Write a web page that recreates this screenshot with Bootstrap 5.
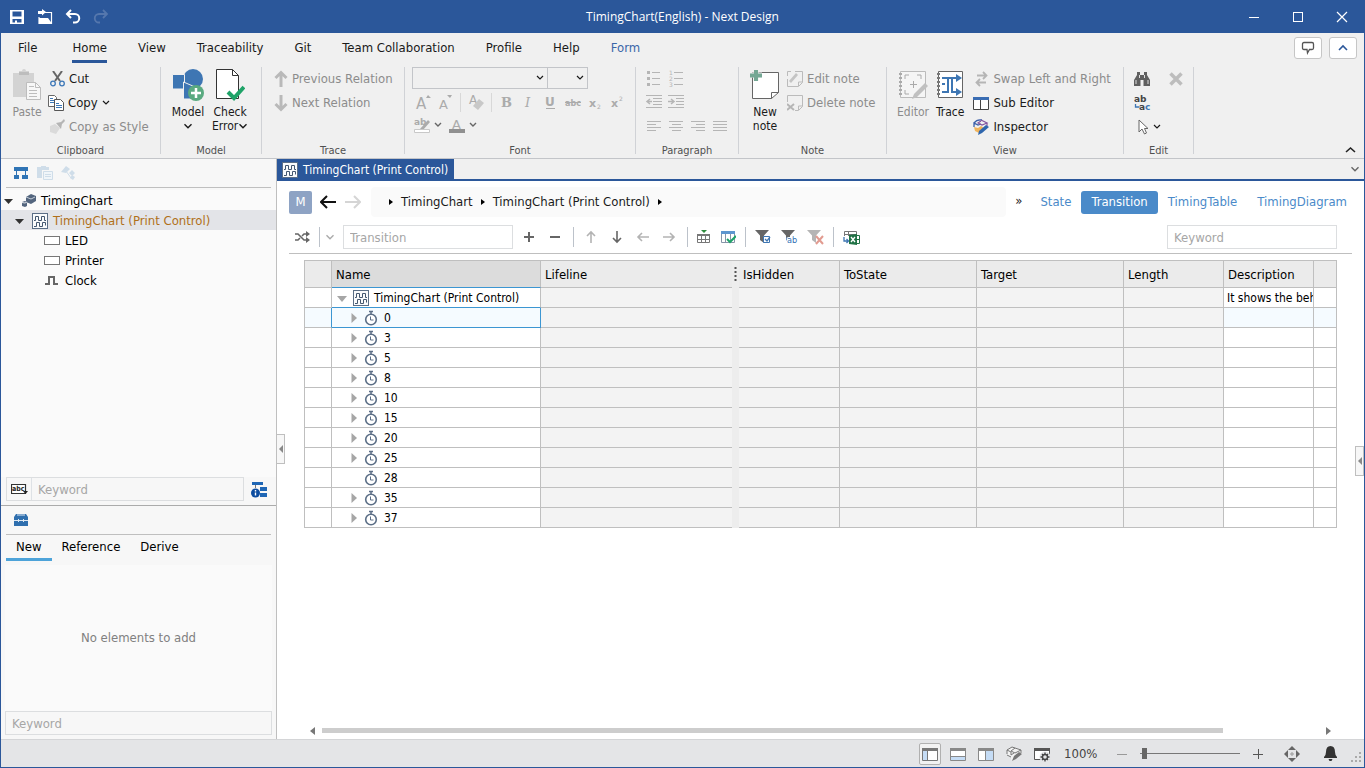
<!DOCTYPE html>
<html lang="en">
<head>
<meta charset="utf-8">
<meta name="viewport" content="width=device-width, initial-scale=1">
<title>TimingChart(English) - Next Design</title>
<link href="https://cdn.jsdelivr.net/npm/bootstrap@5.3.0/dist/css/bootstrap.min.css" rel="stylesheet">
<style>
:root{--brand:#2b579a;--line:#bfbfbf;--muted:#8c8c8c;--sel:#3c96d2}
body{font:13px/20px "DejaVu Sans Condensed","DejaVu Sans",sans-serif;color:#1a1a1a;border:1px solid var(--brand);height:100vh;min-height:600px;overflow:hidden;background:#fff}
button{background:none;border:0;padding:0;color:inherit;display:flex;align-items:center;text-align:left}
button:disabled{color:var(--muted)}
svg{flex:none;display:block}
a{color:inherit;text-decoration:none}
input::placeholder{color:#a6a6a6}
.titlebar{background:var(--brand);height:32px;color:#fff;font:12px/16px "Open Sans",sans-serif}
.side{flex:1 1 0}
.win{width:44px;height:32px;justify-content:center}
.menubar{background:#f0f0f0;height:33px}
.menubar .nav{gap:31px;padding-left:17px}
.menubar .nav a{display:block;line-height:30px;height:30px;border-bottom:3px solid transparent}
.menubar .nav a.current{border-color:var(--brand)}
.menubar .nav a.form-link{color:#3b66a8}
.chips{gap:7px;margin-right:7px}
.chip{width:28px;height:22px;background:#fff;border:1px solid #c6c6c6;border-radius:3px;justify-content:center}
.ribbon{background:#f0f0f0;height:93px;border-bottom:1px solid #c3c5c9;padding-top:1px}
.group{border-right:1px solid #d0d2d6;height:87px;flex:none}
.group-body{height:71px;display:flex}
.group-label{font-size:11px;line-height:16px;padding-top:5px;text-align:center;color:#505050}
.row3 button{height:24px;white-space:nowrap;gap:4px}
.big{flex-direction:column;font-size:12px;line-height:14px;text-align:center;align-self:flex-start;padding-top:2px}
.big svg{margin-bottom:4px}
.big span{display:block}
.combo{appearance:none;background:#f0f0f0;border:1px solid #c3c5c9;height:22px;border-radius:0;display:block}
.combo-box{position:relative}
.combo-box svg{position:absolute;right:4px;top:8px}
.w-font{width:136px}.w-size{width:40px;border-left:0}
.panel{width:276px;flex:none;border-right:1px solid var(--line);background:#f7f7f7}
.rule{height:1px;background:var(--line);margin:0 5px}
.tree{background:#fafafa;margin-top:2px}
.tree li{height:20px;display:flex;align-items:center;line-height:18px;padding-top:1px;color:#000}
.tree li.chosen{background:#e3e4e8;color:#b0701a}
.tree .leaf{padding-left:43px;gap:5px}
.field{border:1px solid #dcdee0;background:transparent;height:24px;padding:0 6px;color:#333;min-width:0;border-radius:0}
.find{border:1px solid #dcdee0;height:24px}
.ptabs a{padding:0 10px;height:26px;line-height:23px;border-bottom:3px solid transparent;color:#000}
.ptabs a.current{border-color:#4da3d9}
.tabstrip{background:#f0f0f0;border-bottom:2px solid var(--brand);height:22px}
.doc-tab{background:var(--brand);color:#fff;padding:2px 6px 0 5px;gap:5px;height:20px;font-size:12px;line-height:18px}
.m-key{width:23px;height:23px;background:#8ea3c4;color:#fff;border-radius:2px;justify-content:center}
.crumbs{background:#fafafa;border-radius:4px;height:30px}
.view-btn{height:23px;padding:0 10px;color:#4a8ac9}
.view-btn.current{background:#4a8ac9;color:#fff;border-radius:3px}
.tb button{width:26px;height:24px;justify-content:center}
.tb .w24{width:24px}
.vsep{width:1px;height:20px;background:#bcc2ca;margin:0 4px 0 5px}
.wide{width:170px}
.grid{table-layout:fixed;border-collapse:separate;border-spacing:0;width:100%;border:solid var(--line);border-width:1px 0 0 1px;color:#000}
.grid th,.grid td{border:solid var(--line);border-width:0 1px 1px 0;overflow:hidden;white-space:nowrap}
.grid th{height:27px;font-weight:400;background:#ebebeb;padding:2px 4px 0;line-height:20px}
.grid th.name{background:#dcdcdc;border-bottom-color:var(--sel)}
.grid td{height:20px;font-size:12px;line-height:16px;padding:0 3px}
.grid td.off{background:#f3f3f3}
.grid .nb{border-right:0}
.grid .split{background:#ededed;border:0;padding:0}
.grid .root td:nth-child(2){border-bottom-color:var(--sel)}
.grid .active td{background:#f5fbff}
.grid .active td.off{background:#f3f3f3}
.grid .active td.split{background:#ededed}
.grid .active td:nth-child(1){border-right-color:var(--sel)}
.grid .active td:nth-child(2){border-color:var(--sel)}
.grid .last-text{padding-right:0}
.cell{display:flex;align-items:center;height:19px}
.handle{position:absolute;width:9px;height:30px;border:1px solid var(--line);background:#f7f7f7;justify-content:center}
.track{height:5px;background:#cdcdcd;margin-right:103px}
.status{height:28px;background:#e4e5e7;border-top:1px solid #d4d5d7;color:#444}
.status .sbtn{width:28px;height:22px;justify-content:center}
.status .on{width:22px;border:1px solid #b0b0b0;border-radius:2px;background:#f2f2f2;margin-right:3px}
.zoom{appearance:none;width:100px;height:14px;background:linear-gradient(#777,#777) center/100% 1px no-repeat;margin:0}
.zoom::-webkit-slider-thumb{appearance:none;width:5px;height:11px;background:#666}
</style>
</head>
<body class="d-flex flex-column">
<svg width="0" height="0" class="position-absolute">
<defs>
<symbol id="wave" viewBox="0 0 16 16"><rect x=".5" y=".5" width="15" height="15" fill="#fafbfc" stroke="#5b6e86"/><path d="M2 7.500h1.500v-4h3v4h3v-4h3v4h1.500M2 13.500h2.500v-4h3v4h3v-4h3v3" fill="none" stroke="#44576f"/></symbol>
<symbol id="clock" viewBox="0 0 14 16"><path d="M7 1v3M5 1.500h4" stroke="#5b6e86" stroke-width="1.500" fill="none"/><circle cx="7" cy="9.500" r="5.300" fill="#fff" stroke="#5b6e86" stroke-width="1.600"/><path d="M6.500 6.500v3.500H9.500" fill="none" stroke="#5b6e86"/></symbol>
<symbol id="chev" viewBox="0 0 8 6"><path d="M1 1l3 3 3-3" fill="none" stroke="currentColor" stroke-width="1.200"/></symbol>
<symbol id="tri" viewBox="0 0 6 10"><path d="M.5 0v10L6 5z" fill="#a6a6a6"/></symbol>
<symbol id="arr" viewBox="0 0 16 16"><path d="M8 14V3M4 7l4-4 4 4" fill="none" stroke="currentColor" stroke-width="1.600"/></symbol>
<symbol id="boldarr" viewBox="0 0 14 18"><path d="M7 17V3M1.500 8L7 2.500 12.500 8" fill="none" stroke="#b9b9b9" stroke-width="3"/></symbol>
<symbol id="funnel" viewBox="0 0 17 16"><path d="M0 1h14L9 6.500V14l-4-3V6.500z" fill="currentColor"/></symbol>
<symbol id="foot" viewBox="0 0 4 6"><path d="M0 0v6l4-3z"/></symbol>
</defs>
</svg>

<header class="titlebar d-flex align-items-center">
  <div class="side d-flex align-items-center gap-2">
    <button class="ms-2" aria-label="Save"><svg width="16" height="16" viewBox="0 0 16 16"><path fill="#fff" fill-rule="evenodd" d="M1 1h14v14H1zM3.500 2.500v5h9v-5zM3.500 10v3.500H6v-2h2v2h4.500V10z"/></svg></button>
    <button class="ms-1" aria-label="Open"><svg width="16" height="16" viewBox="0 0 16 16"><path d="M8 3.500h6.500v11H2V8" fill="none" stroke="#fff" stroke-width="1.200"/><path d="M2 9h9l4 5.500H2zM1 5V2h4V0l4 3-4 3.500V5z" fill="#fff"/></svg></button>
    <button class="ms-1" aria-label="Undo"><svg width="16" height="16" viewBox="0 0 16 16"><path d="M2 5h8a4 4 0 0 1 0 8.500H8M6 1L2 5l4 4" fill="none" stroke="#fff" stroke-width="2"/></svg></button>
    <button class="ms-1" disabled aria-label="Redo"><svg width="16" height="16" viewBox="0 0 16 16"><path d="M14 5H6a4 4 0 0 0 0 8.500h1M10 1l4 4-4 4" fill="none" stroke="#5577ad" stroke-width="1.800"/></svg></button>
  </div>
  <div>TimingChart(English) - Next Design</div>
  <div class="side d-flex justify-content-end">
    <button class="win" aria-label="Minimize"><svg width="12" height="12"><path d="M1 6.500h10" stroke="#fff"/></svg></button>
    <button class="win" aria-label="Maximize"><svg width="12" height="12"><rect x="1.500" y="1.500" width="9" height="9" fill="none" stroke="#fff"/></svg></button>
    <button class="win" aria-label="Close"><svg width="12" height="12"><path d="M1 1l10 10M11 1L1 11" stroke="#fff" stroke-width="1.200"/></svg></button>
  </div>
</header>

<nav class="menubar d-flex justify-content-between">
  <div class="nav flex-nowrap">
    <a href="#" class="me-1">File</a><a href="#" class="current">Home</a><a href="#">View</a><a href="#">Traceability</a><a href="#">Git</a><a href="#">Team Collaboration</a><a href="#">Profile</a><a href="#">Help</a><a href="#" class="form-link">Form</a>
  </div>
  <div class="chips d-flex pt-1">
    <button class="chip" aria-label="Comments"><svg width="14" height="14"><path d="M3 1.500h8q1.500 0 1.500 1.500v4q0 1.500-1.500 1.500H8.500L6.500 12 6 8.500H3Q1.500 8.500 1.500 7V3Q1.500 1.500 3 1.500z" fill="none" stroke="#555" stroke-width="1.300"/></svg></button>
    <button class="chip" aria-label="Collapse"><svg width="12" height="8"><path d="M2 6l4-4 4 4" fill="none" stroke="#2b579a" stroke-width="1.600"/></svg></button>
  </div>
</nav>

<section class="ribbon d-flex">
  <div class="group" style="width:160px">
    <div class="group-body">
      <button class="big" disabled style="margin:0 8px 0 11px"><svg width="30" height="32"><path d="M1 4h6V2h3a2 2 0 0 1 4 0h3v2h5v24H1z" fill="#d3d3d3"/><path d="M7 3h10v3H7z" fill="#bdbdbd"/><path d="M14.500 13.500h9l5 5v12h-14z" fill="#f7f7f7" stroke="#bdbdbd"/><path d="M17 17.500h5M17 21.500h8M17 24.500h8M17 27.500h8M23.500 13.500v5h5" stroke="#bdbdbd" fill="none"/></svg><span>Paste</span></button>
      <div class="row3">
        <button><svg width="15" height="16"><path d="M3 0l7 10M12 0L5 10" stroke="#666" stroke-width="2"/><circle cx="3" cy="12.500" r="2.300" fill="none" stroke="#3d78b8" stroke-width="1.300"/><circle cx="12" cy="12.500" r="2.300" fill="none" stroke="#3d78b8" stroke-width="1.300"/></svg>Cut</button>
        <button style="margin-left:-2px"><svg width="16" height="16"><path d="M.5.500h6l2 2v9h-8z" fill="#fff" stroke="#666"/><path d="M2 3.500h3M2 5.500h4M2 7.500h4" stroke="#3d78b8"/><path d="M6.500 4.500h6l3 3v8h-9z" fill="#fff" stroke="#555"/><path d="M8 8.500h3M8 10.500h6M8 12.500h6" stroke="#3d78b8"/></svg>Copy<svg width="8" height="6"><use href="#chev"/></svg></button>
        <button disabled><svg width="15" height="16"><path d="M0 7l5-2 5 4-4 6-6-2z" fill="#dadada"/><path d="M6 4l5-1 3-3 1 2-3 3-1 5z" fill="#b5b5b5"/></svg>Copy as Style</button>
      </div>
    </div>
    <div class="group-label">Clipboard</div>
  </div>
  <div class="group" style="width:101px">
    <div class="group-body">
      <button class="big" style="margin:0 7px 0 10px"><svg width="34" height="32"><circle cx="22" cy="10" r="10" fill="#3e76b3"/><path d="M1.500 5.500h12V20h-12z" fill="#3e76b3" stroke="#f0f0f0"/><path d="M12.500 13l14 6v11h-14z" fill="#3e76b3" stroke="#f0f0f0"/><circle cx="25" cy="24" r="8" fill="#5aaa80"/><path d="M25 19v10M20 24h10" stroke="#fff" stroke-width="2.500"/></svg><span>Model</span><svg width="10" height="7" class="mt-1"><use href="#chev"/></svg></button>
      <button class="big"><svg width="30" height="32"><path d="M1.500.500h16l6 6v23h-22z" fill="#fff" stroke="#333"/><path d="M17.500.500v6h6" fill="none" stroke="#333"/><path d="M13 23l6 6 10-11" fill="none" stroke="#1fa368" stroke-width="4"/></svg><span>Check</span><span class="d-flex align-items-center">Error<svg width="10" height="7" class="m-0"><use href="#chev"/></svg></span></button>
    </div>
    <div class="group-label">Model</div>
  </div>
  <div class="group" style="width:143px">
    <div class="group-body ps-2 ms-1">
      <div class="row3"><button disabled><svg width="14" height="18"><use href="#boldarr"/></svg>Previous Relation</button>
      <button disabled><svg width="14" height="18"><use href="#boldarr" transform="rotate(180 7 9)"/></svg>Next Relation</button></div>
    </div>
    <div class="group-label">Trace</div>
  </div>
  <div class="group" style="width:231px">
    <div class="group-body flex-column" style="padding-left:7px">
      <div class="d-flex"><div class="combo-box"><select class="combo w-font" aria-label="Font"></select><svg width="8" height="6"><use href="#chev"/></svg></div><div class="combo-box"><select class="combo w-size" aria-label="Size"></select><svg width="8" height="6"><use href="#chev"/></svg></div></div>
      <svg width="216" height="48" font-family="DejaVu Sans" fill="#ababab" role="img" aria-label="Character formatting">
        <text x="4" y="20" font-size="15">A</text><path d="M14 9l2-3 3 3M35 6h5l-2 3z"/><text x="27" y="20" font-size="13">A</text>
        <path d="M48.500 4v19M79.500 4v19" stroke="#d8d8d8"/><text x="57" y="15" font-size="12">A</text><path d="M61 17l6-7 5 4-6 7z" fill="#c8c8c8"/>
        <text x="89" y="18" font-size="13" font-weight="bold" font-family="DejaVu Serif">B</text><text x="113" y="18" font-size="13" font-style="italic" font-family="DejaVu Serif">I</text><text x="133" y="17" font-size="12" font-weight="bold">U</text><path d="M134 19.500h9M153 13.500h16" stroke="#ababab"/><text x="153" y="17" font-size="8" font-weight="bold">abc</text><text x="177" y="18" font-size="11" font-weight="bold">x</text><text x="185" y="20" font-size="6">2</text><text x="199" y="18" font-size="11" font-weight="bold">x</text><text x="207" y="12" font-size="6">2</text>
        <text x="2" y="36" font-size="9" font-weight="bold">ab</text><path d="M8 40l8-9 2 2-7 8z"/><path d="M2.500 40.500h15v3h-15z" fill="#fff" stroke="#c8c8c8"/><text x="40" y="40" font-size="13">A</text><path d="M37 40h16v4H37z" fill="#909090"/><path d="M23 34l3 3 3-3M58 34l3 3 3-3" fill="none" stroke="#666" stroke-width="1.400"/>
      </svg>
    </div>
    <div class="group-label">Font</div>
  </div>
  <div class="group" style="width:103px">
    <div class="group-body ps-2">
      <svg width="90" height="71" fill="none" stroke="#b5b5b5" role="img" aria-label="Lists, indents and alignment"><path d="M8 5.500h8M8 11.500h8M8 17.500h8M30 5.500h9M30 11.500h9M30 17.500h9M2 28.500h16M9 31.500h9M9 34.500h9M9 37.500h9M2 40.500h16M24 28.500h16M32 31.500h8M32 34.500h8M32 37.500h8M24 40.500h16M3 54.500h14M3 57.500h9M3 60.500h14M3 63.500h9M25 54.500h14M28 57.500h9M25 60.500h14M28 63.500h9M47 54.500h14M52 57.500h9M47 60.500h14M52 63.500h9M69 54.500h14M69 57.500h14M69 60.500h14M69 63.500h14"/><path d="M3 5.500h3M3 11.500h3M3 17.500h3" stroke-width="3"/><path d="M3 34.500h5M6 32l-3 2.500L6 37M24 34.500h6M27 32l3 2.500-3 2.500" stroke-width="1.500"/><g fill="#b5b5b5" stroke="none" font-size="6" font-family="DejaVu Sans"><text x="25" y="8">1</text><text x="25" y="14">2</text><text x="25" y="20">3</text></g></svg>
    </div>
    <div class="group-label">Paragraph</div>
  </div>
  <div class="group" style="width:148px">
    <div class="group-body">
      <button class="big" style="margin:0 7px 0 11px"><svg width="30" height="32"><path d="M2.500 3.500h26v20l-7 6h-19z" fill="#fff" stroke="#666"/><path d="M21.500 29.500v-6h7" fill="none" stroke="#666"/><path d="M6 0v12M0 6h12" stroke="#f0f0f0" stroke-width="5"/><path d="M6 1v11M0 6.500h12" stroke="#74a794" stroke-width="4"/></svg><span>New<br>note</span></button>
      <div class="row3">
        <button disabled><svg width="16" height="16"><path d="M8 .500h7.500v11l-4 4H.500V8M11.500 15v-4h4M.500 5V.500H4" fill="none" stroke="#bbb"/><path d="M2 10l7-8 2 2-7 8z" fill="#c4c4c4"/></svg>Edit note</button>
        <button disabled><svg width="16" height="16"><path d="M.500 7V.500h15v11l-4 4H8M11.500 15v-4h4" fill="none" stroke="#bbb"/><path d="M0 9l7 6M7 9l-7 6" stroke="#b5b5b5" stroke-width="2"/></svg>Delete note</button>
      </div>
    </div>
    <div class="group-label">Note</div>
  </div>
  <div class="group" style="width:237px">
    <div class="group-body">
      <button class="big" disabled style="margin:0 7px 0 10px"><svg width="30" height="32"><path d="M2.500 2.500h25v26h-25z" fill="#f5f5f5" stroke="#bbb"/><path d="M2.500 4v24" stroke="#aaa" stroke-width="3" stroke-dasharray="2 2"/><path d="M7 10V6h4M19 6h4v4M7 21v4h4M15.500 12v7M12 15.500h7" fill="none" stroke="#aaa"/><path d="M14 30l2-5 11-11 3 3-11 11z" fill="#c0c0c0"/></svg><span>Editor</span></button>
      <button class="big" style="margin-right:9px"><svg width="28" height="32"><path d="M2.500 2.500h24v26h-24z" fill="#fff" stroke="#666"/><path d="M2.500 4v24" stroke="#777" stroke-width="3" stroke-dasharray="2 2"/><path d="M6 9h5M6 23h6V9h9M14 12" fill="none" stroke="#3e76b3" stroke-width="2"/><path d="M16 9v14h5M6 15h3" fill="none" stroke="#3e76b3" stroke-width="2"/><path d="M20 9m0-4l6 4-6 4zM20 19l6 4-6 4z" fill="#3e76b3"/></svg><span>Trace</span></button>
      <div class="row3">
        <button disabled><svg width="16" height="16"><path d="M4 4.500h9M10 1l3.500 3.500L10 8M13 11.500H4M7 8l-3.500 3.500L7 15" fill="none" stroke="#b5b5b5" stroke-width="1.800"/></svg>Swap Left and Right</button>
        <button><svg width="16" height="16"><path d="M.500 2.500h15v12H.500zM7.500 4v10" fill="#fff" stroke="#444"/><path d="M0 2h16v3H0z" fill="#3a6db3"/></svg>Sub Editor</button>
        <button><svg width="16" height="16"><path d="M1 8l4 1 3-2 3 2-5 5-4-2z" fill="#f0b45c"/><path d="M1 4q3-4 8-3M1 8V4l4 2 3-1" fill="none" stroke="#3a5fa8" stroke-width="1.300"/><path d="M8 1l6 3-5 2-4-2 3-2M14 4v3" fill="none" stroke="#8657a0" stroke-width="1.200"/><path d="M5 16l1-4 7-6 3 2-7 6z" fill="#2f66ad"/></svg>Inspector</button>
      </div>
    </div>
    <div class="group-label">View</div>
  </div>
  <div class="group" style="width:70px">
    <div class="group-body" style="padding-left:10px;gap:8px">
      <div class="row3">
        <button aria-label="Find"><svg width="16" height="14"><path d="M3 0h3v3h4V0h3v3l3 5v6H9.500V8h-3v6H0V8l3-5z" fill="#606060"/><path d="M2 8v4M14 8v4M5.500 3v3M10.500 3v3" stroke="#ddd"/></svg></button>
        <button aria-label="Replace"><svg width="17" height="18" font-family="DejaVu Sans" font-weight="bold" font-size="9"><text x="0" y="8" fill="#444">ab</text><text x="5" y="16" fill="#444">a</text><text x="11" y="16" fill="#3e76b3">c</text><path d="M1.500 10v3h4" fill="none" stroke="#3e76b3" stroke-width="1.300"/></svg></button>
        <button class="ps-1" aria-label="Select"><svg width="11" height="16"><path d="M1 1v12l3-3 2.500 5 2-1L6.500 9.500H10z" fill="#fff" stroke="#666"/></svg><svg width="8" height="6"><use href="#chev"/></svg></button>
      </div>
      <button class="align-self-start" style="height:24px" disabled aria-label="Delete"><svg width="14" height="14"><path d="M1.500 1.500l11 11M12.500 1.500l-11 11" stroke="#bdbdbd" stroke-width="3.500"/></svg></button>
    </div>
    <div class="group-label">Edit</div>
  </div>
  <button class="ms-auto align-self-end mb-1 me-2" aria-label="Collapse ribbon"><svg width="11" height="8"><path d="M1 6l4.500-4L10 6" fill="none" stroke="#222" stroke-width="1.600"/></svg></button>
</section>

<main class="d-flex flex-grow-1 position-relative" style="min-height:0">
  <aside class="panel d-flex flex-column">
    <div class="d-flex align-items-center gap-2" style="height:28px;padding-left:12px">
      <button aria-label="Model tree"><svg width="16" height="14"><path d="M1 1h14v4H1zM1 9h5v4H1zM9 9h6v4H9z" fill="#2f74b5"/><path d="M3.500 5v4M12.500 5v4" stroke="#2f74b5"/></svg></button>
      <button aria-label="Pages" disabled><svg width="16" height="14"><path d="M0 1h4V0h5v1h3v3H5v8H0z" fill="#cfdde9"/><path d="M6.500 5.500h9v8h-9zM8 8.500h6M8 10.500h6" fill="#f0f5f9" stroke="#cfdde9"/></svg></button>
      <button aria-label="Relations" disabled><svg width="16" height="14"><path d="M5 0l4 3-4 4-5-1zM11 4l3 3-3 3-3-3zM11 9l3 2-2 3-3-2z" fill="#cfdde9"/><path d="M5 5l5 7" stroke="#cfdde9"/></svg></button>
    </div>
    <div class="rule"></div>
    <ul class="tree list-unstyled flex-grow-1 mb-0">
      <li><svg width="9" height="6" style="margin:3px 9px 0 3px"><path d="M0 0h9L4.500 5z" fill="#333"/></svg><svg width="14" height="14" style="margin-right:5px"><path d="M4 3l5-3 5 2v5l-5 3-5-2z" fill="#53657e"/><path d="M4 3l5 2 4-2" stroke="#c8d0da" fill="none"/><path d="M0 8l3-1 2 1v4l-2 1-3-1z" fill="#53657e"/><path d="M0 8.500l3 .5 2-1" stroke="#e0e4ea" fill="none"/></svg>TimingChart</li>
      <li class="chosen"><svg width="9" height="6" style="margin:3px 8px 0 14px"><path d="M0 0h9L4.500 5z" fill="#333"/></svg><svg width="16" height="16" style="margin-right:5px"><use href="#wave"/></svg>TimingChart (Print Control)</li>
      <li class="leaf"><svg width="16" height="10"><rect x=".5" y=".5" width="15" height="8" fill="#fff" stroke="#777"/></svg>LED</li>
      <li class="leaf"><svg width="16" height="10"><rect x=".5" y=".5" width="15" height="8" fill="#fff" stroke="#777"/></svg>Printer</li>
      <li class="leaf"><svg width="16" height="10"><path d="M1 8h4V1h5v7h4" fill="none" stroke="#666" stroke-width="2"/></svg>Clock</li>
    </ul>
    <div class="d-flex align-items-center" style="padding:0 8px 4px 5px;gap:7px">
      <div class="find d-flex align-items-center flex-grow-1"><button class="h-100 ps-1" style="width:24px" aria-label="Search mode"><svg width="18" height="12"><path d="M.500 1.500h14v9H.500z" fill="#fff" stroke="#333" stroke-width="1.200"/><text x="1" y="8" font-size="7" font-weight="bold" font-family="DejaVu Sans Condensed" fill="#222">abc</text><path d="M12 8h5l-2.500 3z" fill="#222"/></svg></button><input class="border-0 bg-transparent h-100 border-start flex-grow-1" style="min-width:0;padding-left:6px" placeholder="Keyword" aria-label="Tree keyword"></div>
      <button aria-label="Tree details"><svg width="17" height="17"><path d="M1 1h11v3H1zM9 6h7v4H9zM9 12h7v4H9z" fill="#1f66b5"/><path d="M4.500 4v3" stroke="#777"/><circle cx="4.500" cy="12" r="4.500" fill="#0d4da0"/><path d="M4.500 9v1.500M4.500 11.500v3" stroke="#fff" stroke-width="1.400"/></svg></button>
    </div>
    <div style="height:1px;background:#ababab"></div>
    <section class="d-flex flex-column" style="flex:0 0 233px">
      <div class="d-flex align-items-center" style="height:28px;padding-left:13px"><svg width="14" height="14"><path d="M2 1h10l2 3v9H0V4z" fill="#2f6fae"/><path d="M3 2h8M0 7.500h14M4.500 6v3M9.500 6v3" stroke="#dfe9f3"/></svg></div>
      <div class="rule"></div>
      <nav class="ptabs d-flex" style="padding-left:5px"><a href="#" class="current">New</a><a href="#">Reference</a><a href="#">Derive</a></nav>
      <div class="flex-grow-1 d-flex align-items-center justify-content-center" style="margin:4px 4px 0;background:#fafafa;color:#808080">No elements to add</div>
      <input class="field" style="margin:0 4px 4px" placeholder="Keyword" aria-label="Element keyword">
    </section>
  </aside>

  <article class="flex-grow-1 d-flex flex-column position-relative" style="min-width:0">
    <div class="tabstrip d-flex justify-content-between align-items-center">
      <button class="doc-tab"><svg width="16" height="16"><use href="#wave"/></svg>TimingChart (Print Control)</button>
      <button class="me-1" style="color:#666" aria-label="Open tabs"><svg width="10" height="7"><use href="#chev"/></svg></button>
    </div>
    <div class="d-flex align-items-center" style="padding:6px 7px 0 12px">
      <button class="m-key">M</button>
      <button style="margin-left:8px;color:#111" aria-label="Back"><svg width="16" height="14"><path d="M16 7H1M7 1L1 7l6 6" fill="none" stroke="currentColor" stroke-width="2"/></svg></button>
      <button style="margin:0 10px 0 9px;color:#d5d5d5" aria-label="Forward"><svg width="16" height="14"><path d="M0 7h15M9 1l6 6-6 6" fill="none" stroke="currentColor" stroke-width="2"/></svg></button>
      <nav class="crumbs d-flex align-items-center flex-grow-1 gap-2" style="padding-left:18px"><svg width="4" height="6"><use href="#foot"/></svg><a href="#">TimingChart</a><svg width="4" height="6"><use href="#foot"/></svg><a href="#">TimingChart (Print Control)</a><svg width="4" height="6"><use href="#foot"/></svg></nav>
      <button style="margin:0 8px 2px 9px" aria-label="More">»</button>
      <button class="view-btn">State</button><button class="view-btn current">Transition</button><button class="view-btn">TimingTable</button><button class="view-btn">TimingDiagram</button>
    </div>
    <div class="tb d-flex align-items-center" style="padding:8px 27px 4px 12px;color:#666">
      <button aria-label="Shuffle"><svg width="16" height="12"><path d="M1 3h3l6 6h4M1 9h3l2-2M8 5l2-2h4" fill="none" stroke="currentColor" stroke-width="1.600"/><path d="M12 0l4 3-4 3zM12 6l4 3-4 3z" fill="currentColor"/></svg></button>
      <span class="vsep ms-1 me-0"></span>
      <button style="width:19px;color:#aaa" aria-label="Options"><svg width="10" height="7"><use href="#chev"/></svg></button>
      <input class="field wide ms-1" style="margin-right:3px" placeholder="Transition" aria-label="Transition">
      <button aria-label="Add"><svg width="12" height="12"><path d="M6 1v10M1 6h10" stroke="currentColor" stroke-width="2"/></svg></button>
      <button aria-label="Remove"><svg width="12" height="12"><path d="M1 6h10" stroke="currentColor" stroke-width="2"/></svg></button>
      <span class="vsep"></span>
      <button disabled aria-label="Up"><svg width="16" height="16" opacity=".65"><use href="#arr"/></svg></button>
      <button aria-label="Down"><svg width="16" height="16"><use href="#arr" transform="rotate(180 8 8)"/></svg></button>
      <button disabled aria-label="Left"><svg width="16" height="16" opacity=".65"><use href="#arr" transform="rotate(-90 8 8)"/></svg></button>
      <button disabled aria-label="Right"><svg width="16" height="16" opacity=".65"><use href="#arr" transform="rotate(90 8 8)"/></svg></button>
      <span class="vsep"></span>
      <button class="w24" aria-label="Insert row"><svg width="14" height="14"><path d="M4 0h6L7 3z" fill="#2e8b3d"/><path d="M.500 5.500h12v7H.500zM4.500 5v8M8.500 5v8M0 9.500h13" fill="none" stroke="#777"/><path d="M0 4h13v2H0z" fill="#777"/></svg></button>
      <button class="w24" aria-label="Check columns"><svg width="15" height="14"><path d="M.500 1.500h13v11H.500zM4.500 3v9M9.500 3v9" fill="#fff" stroke="#8795a8"/><path d="M0 1h14v3H0z" fill="#5e96cf"/><path d="M6 9l3 3 6-6" fill="none" stroke="#1fa368" stroke-width="2"/></svg></button>
      <span class="vsep"></span>
      <button aria-label="Filter by value"><svg width="17" height="16"><use href="#funnel"/><path d="M8.500 7.500h6v6h-6z" fill="#fff" stroke="#3e76b3"/><path d="M10 10l2 2 3-4" fill="none" stroke="#3e76b3" stroke-width="1.300"/></svg></button>
      <button aria-label="Filter by text"><svg width="17" height="16"><use href="#funnel"/><text x="6" y="14" font-size="9" font-family="DejaVu Sans Condensed" fill="#2f6fb5" stroke="#fff" stroke-width="2" paint-order="stroke">ab</text></svg></button>
      <button disabled aria-label="Clear filter"><svg width="17" height="16" style="color:#b5b5b5"><use href="#funnel"/><path d="M9 7l7 8M16 7l-7 8" stroke="#e29b90" stroke-width="2"/></svg></button>
      <span class="vsep"></span>
      <button aria-label="Export to Excel"><svg width="17" height="15"><path d="M1.500 6V1.500h12V5M1 4.500h12M5.500 1v5" fill="none" stroke="#777"/><path d="M1 7v4h4M3.500 9l2 2-2 2" fill="none" stroke="#3e76b3" stroke-width="1.300"/><path d="M6 5l8-1v11l-8-1z" fill="#217346"/><path d="M14 5.500h2.500v8H14M14 9.500h2" fill="#fff" stroke="#217346"/><path d="M8 7l4 5M12 7l-4 5" stroke="#fff" stroke-width="1.300"/></svg></button>
      <input class="field wide ms-auto" placeholder="Keyword" aria-label="Grid keyword">
    </div>
    <div class="rule" style="margin:0 12px"></div>
    <div style="padding:6px 27px 0">
      <table class="grid">
        <colgroup><col style="width:27px"><col style="width:209px"><col><col style="width:7px"><col style="width:101px"><col style="width:137px"><col style="width:147px"><col style="width:100px"><col style="width:90px"><col style="width:23px"></colgroup>
        <thead><tr><th></th><th class="name">Name</th><th class="nb">Lifeline</th><th class="split"><svg width="3" height="15" class="mx-auto"><path d="M1.500 0v15" stroke="#555" stroke-width="2" stroke-dasharray="2 2"/></svg></th><th>IsHidden</th><th>ToState</th><th>Target</th><th>Length</th><th>Description</th><th></th></tr></thead>
        <tbody id="rows">
          <tr class="root"><td></td><td><div class="cell"><svg width="10" height="6" style="margin:3px 6px 0 2px"><path d="M0 0h10L5 6z" fill="#a6a6a6"/></svg><svg width="16" height="16" style="margin-right:5px"><use href="#wave"/></svg>TimingChart (Print Control)</div></td><td class="off nb"></td><td class="split"></td><td class="off"></td><td class="off"></td><td class="off"></td><td class="off"></td><td class="last-text">It shows the beh</td><td></td></tr>
        </tbody>
      </table>
    </div>
    <div class="mt-auto d-flex align-items-center" style="padding:0 33px;height:17px">
      <svg width="5" height="8" style="margin-right:7px"><path d="M5 0v8L0 4z" fill="#777"/></svg>
      <div class="track flex-grow-1"></div>
      <svg width="5" height="8"><path d="M0 0v8l5-4z" fill="#777"/></svg>
    </div>
    <button class="handle" style="left:-1px;top:275px" aria-label="Collapse left panel"><svg width="4" height="8"><path d="M4 0v8L0 4z" fill="#888"/></svg></button>
    <button class="handle" style="right:0;top:287px" aria-label="Expand right panel"><svg width="4" height="8"><path d="M4 0v8L0 4z" fill="#888"/></svg></button>
  </article>
</main>

<footer class="status d-flex align-items-center justify-content-end">
  <button class="sbtn on" aria-label="Left pane"><svg width="16" height="14"><path d="M.500 1.500h15v12H.500z" fill="#fff" stroke="#777"/><path d="M1 4h4v9H1z" fill="#c5dcf5"/><path d="M0 1h16v3H0zM5 4h1v10H5z" fill="#777"/></svg></button>
  <button class="sbtn" aria-label="Bottom pane"><svg width="16" height="14"><path d="M.500 1.500h15v12H.500z" fill="#fff" stroke="#888"/><path d="M1 9h14v4H1z" fill="#c5dcf5"/><path d="M0 1h16v3H0zM1 9h14v1H1z" fill="#888"/></svg></button>
  <button class="sbtn" aria-label="Right pane"><svg width="16" height="14"><path d="M.500 1.500h15v12H.500z" fill="#fff" stroke="#888"/><path d="M8 4h7v9H8z" fill="#c5dcf5"/><path d="M0 1h16v3H0zM7 4h1v10H7z" fill="#888"/></svg></button>
  <button class="sbtn" aria-label="Inspector"><svg width="17" height="16"><path d="M1 4l5-3 9 3 1 3-9 8-2-1v-3L1 9z" fill="#f2f2f2"/><path d="M1 8V4l5-3 3 1-4 3 4 2 6-3-6-2M1 4l4 2v3l3-2M1 9l4 2M15 4v3" fill="none" stroke="#777"/><path d="M6 15l2-5 5-4 3 2-6 5z" fill="#777"/></svg></button>
  <button class="sbtn" aria-label="Display settings"><svg width="17" height="16"><path d="M.500 2.500h15v11H.500z" fill="#fff" stroke="#555"/><path d="M0 2h16v3H0z" fill="#555"/><circle cx="11" cy="11" r="5.500" fill="#e4e5e7"/><circle cx="11" cy="11" r="2.500" fill="none" stroke="#444" stroke-width="1.400"/><path d="M11 6.500v2M11 13.500v2M6.500 11h2M13.500 11h2M8 8l1 1M13 13l1 1M14 8l-1 1M8 14l1-1" stroke="#444" stroke-width="1.300"/></svg></button>
  <span class="ms-2" style="width:49px">100%</span>
  <button aria-label="Zoom out" class="ms-1" style="margin-right:9px;width:14px"><svg width="10" height="10"><path d="M0 5.500h10" stroke="#999"/></svg></button>
  <input type="range" class="zoom" min="0" max="100" value="2" aria-label="Zoom">
  <button aria-label="Zoom in" style="margin:0 21px 0 13px"><svg width="10" height="10"><path d="M0 5.500h10M5.500 0v10" stroke="#555"/></svg></button>
  <button aria-label="Fit" style="margin-right:24px"><svg width="16" height="16"><path d="M8 0l4 4H4zM8 16l4-4H4zM0 8l4-4v8zM16 8l-4-4v8z" fill="#666"/><path d="M8 6v4M6 8h4" stroke="#999"/></svg></button>
  <button aria-label="Notifications" style="margin-right:14px"><svg width="13" height="15"><path d="M6.500 0q4.500 0 4.500 6 0 3 2 5v1H0v-1q2-2 2-5 0-6 4.500-6zM4.500 13h4l-1 2h-2z" fill="#333"/></svg></button>
  <svg width="11" height="11" class="align-self-end mb-1" style="margin-right:2px"><path d="M8 0h2v2H8zM4 4h2v2H4zM8 4h2v2H8zM0 8h2v2H0zM4 8h2v2H4zM8 8h2v2H8z" fill="#aaa"/></svg>
</footer>

<script>
const leafs = ['28'];
document.getElementById('rows').insertAdjacentHTML('beforeend',
  ['0','3','5','8','10','15','20','25','28','35','37'].map((t, i) => `
  <tr class="${i ? '' : 'active'}"><td></td><td><div class="cell" style="padding-left:16px">
    <svg width="6" height="10" style="margin-right:7px">${leafs.includes(t) ? '' : '<use href="#tri"/>'}</svg>
    <svg width="14" height="16" style="margin-right:6px"><use href="#clock"/></svg>${t}</div></td>
    <td class="off nb"></td><td class="split"></td><td class="off"></td><td class="off"></td><td class="off"></td><td class="off"></td><td></td><td></td></tr>`).join(''));
</script>
<script src="https://cdn.jsdelivr.net/npm/bootstrap@5.3.0/dist/js/bootstrap.bundle.min.js"></script>
</body>
</html>
